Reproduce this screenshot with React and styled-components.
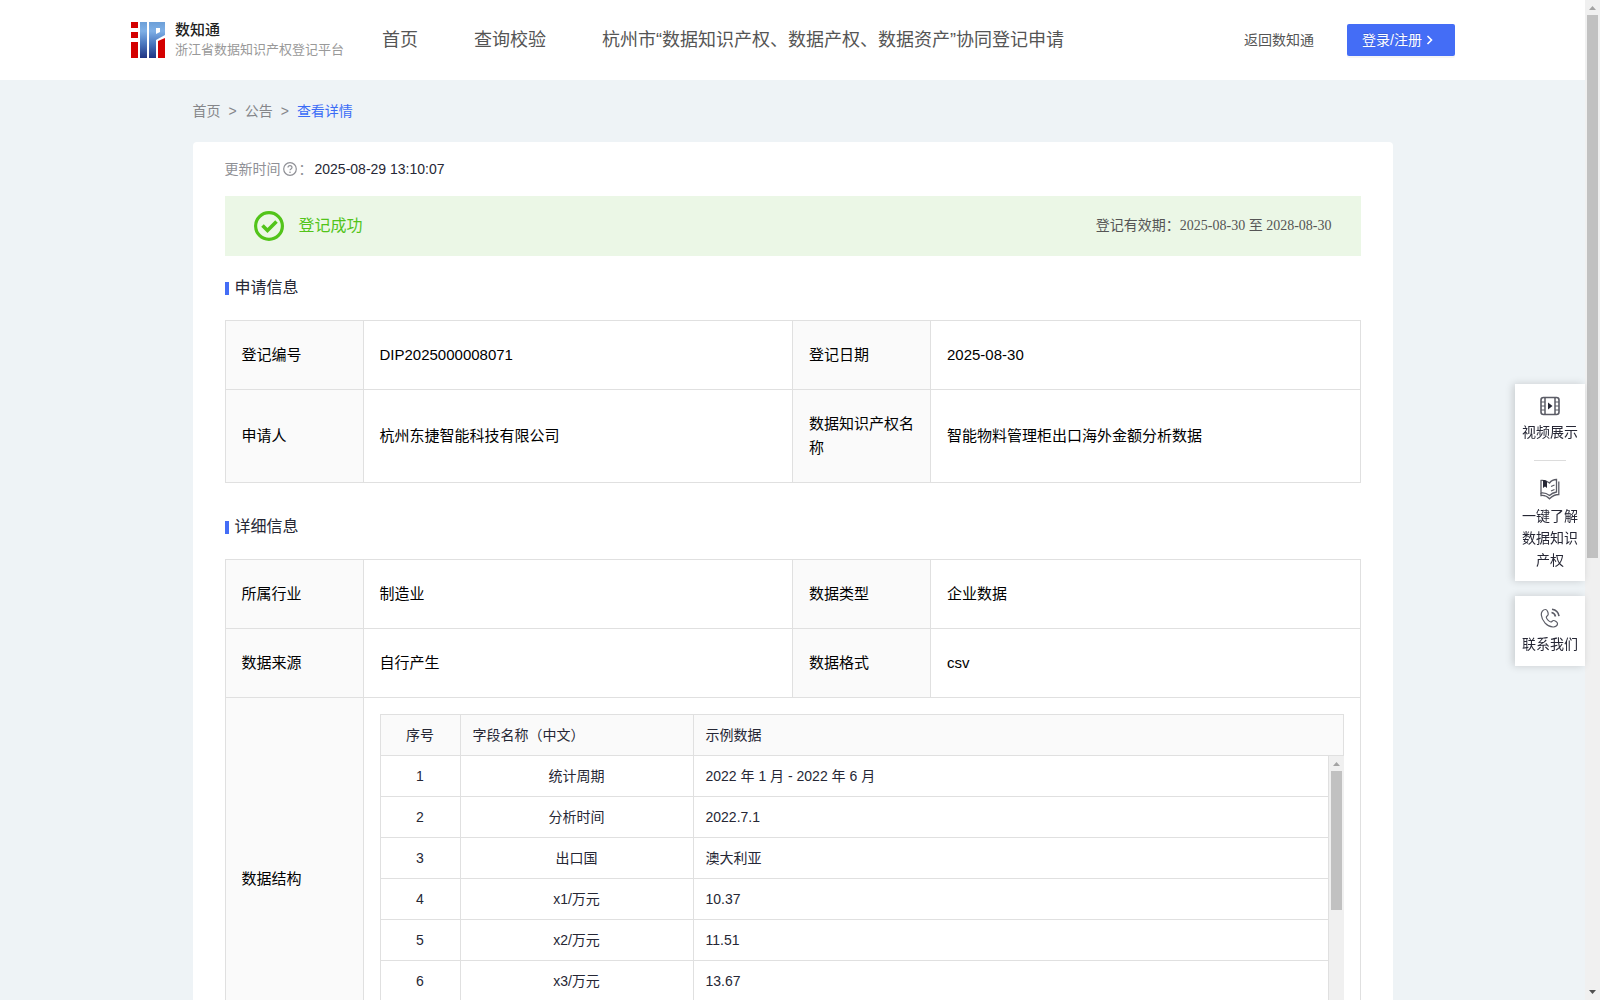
import React from "react";
import styled, { createGlobalStyle } from "styled-components";

const GlobalStyle = createGlobalStyle`
  * {
    box-sizing: border-box;
  }
  body {
    margin: 0;
    font-family: "Liberation Sans", "Noto Sans CJK SC", sans-serif;
    font-size: 14px;
    line-height: 22px;
    color: #262735;
    background: #eef3f6;
  }
  a {
    color: inherit;
    text-decoration: none;
  }
`;

const applyRows = [
  ["登记编号", "DIP2025000008071", "登记日期", "2025-08-30"],
  ["申请人", "杭州东捷智能科技有限公司", "数据知识产权名称", "智能物料管理柜出口海外金额分析数据"],
];

const detailRows = [
  ["所属行业", "制造业", "数据类型", "企业数据"],
  ["数据来源", "自行产生", "数据格式", "csv"],
];

const fields = [
  ["统计周期", "2022 年 1 月 - 2022 年 6 月"],
  ["分析时间", "2022.7.1"],
  ["出口国", "澳大利亚"],
  ["x1/万元", "10.37"],
  ["x2/万元", "11.51"],
  ["x3/万元", "13.67"],
];

const Logo = () => (
  <svg width="34" height="36" viewBox="0 0 34 36" aria-hidden="true">
    <defs>
      <linearGradient id="blue" x1="0" y1="0" x2="0" y2="36" gradientUnits="userSpaceOnUse">
        <stop offset="0" stopColor="#6c9fd8" />
        <stop offset="0.25" stopColor="#7fb0e6" />
        <stop offset="0.6" stopColor="#4a78bf" />
        <stop offset="1" stopColor="#1f3483" />
      </linearGradient>
    </defs>
    <path fill="#d40000" d="M0 0h7v6H0zM0 10h7v6H0zM0 20h7v16H0zM27 19l7-3v20h-7z" />
    <path fill="url(#blue)" fillRule="evenodd" d="M9 0h7v36H9zM18 0h16v13l-9 5v18h-7zM25 6v6l4-2V6z" />
  </svg>
);

const FilmIcon = () => (
  <svg width="20" height="20" viewBox="0 0 20 20" fill="none" stroke="#5b5c66" aria-hidden="true">
    <rect x="1" y="1.5" width="18" height="17" rx="2.5" strokeWidth="1.6" />
    <path d="M5 2v16M15 2v16" stroke="#33343f" strokeWidth="1.2" />
    <path d="M1 6h4M1 10h4M1 14h4M15 6h4M15 10h4M15 14h4" strokeWidth="1.2" />
    <path d="M8 6.5v7l4.5-3.5z" fill="#262735" stroke="none" />
  </svg>
);

const BookIcon = () => (
  <svg width="20" height="22" viewBox="0 0 20 22" fill="none" stroke="#5b5c66" strokeWidth="1.3" aria-hidden="true">
    <path d="M1 2.500c3-.5 6 .5 8.500 2.500C11 3 13.500 1.500 16.500 1.500V14c-3 .5-5 1.500-7 3.500C7 15.500 4 14.500 1 15z" />
    <path d="M18.800 3.500v13c-3.500 0-6.500 1.500-9.300 4.200C7 18 4 17 1 17.500V15" />
    <path d="M3 2v8l2-1.500L7 10V3.500L5 2z" fill="#262735" stroke="none" />
    <path d="M11 8.500l3.500-1.500M11 13l3.500-1.500" />
  </svg>
);

const PhoneIcon = () => (
  <svg width="20" height="20" viewBox="0 0 20 20" fill="none" stroke="#5b5c66" strokeWidth="1.200" aria-hidden="true">
    <path d="M5.500 1.500C3 1.500 1 4 1.300 7c.6 6 5.700 11.500 11.700 12 2.500.2 4.700-1.500 4.500-3.500-.1-1.500-2.500-3-4-3-1.200 0-1.500 1.500-2.600 1.500C9 13.500 6.500 11 6.300 9.300 6.200 8.200 8 8 8.200 6.500 8.400 4.500 7 1.500 5.500 1.500z" />
    <path d="M11.500 4.500c2 .3 3.500 1.800 4 4M12 1.200c3.700.5 6.500 3.300 7 7" strokeWidth="1.600" />
  </svg>
);

const CheckIcon = () => (
  <svg width="30" height="30" viewBox="0 0 30 30" fill="none" stroke="#52c41a" aria-hidden="true">
    <circle cx="15" cy="15" r="13.400" strokeWidth="3.200" />
    <path d="M8.500 14.500l5 5 9-9" strokeWidth="3.600" />
  </svg>
);

const HelpIcon = () => (
  <svg width="14" height="14" viewBox="0 0 14 14" fill="none" stroke="#8f9096" aria-hidden="true">
    <circle cx="7" cy="7" r="6.300" strokeWidth="1.200" />
    <path d="M5 5.600c0-2.600 4-2.600 4 0 0 1.300-2 1.400-2 2.700" strokeWidth="1.200" />
    <circle cx="7" cy="10.200" r="0.800" fill="#8f9096" stroke="none" />
  </svg>
);

const Scrollbar = ({ thumb }) => (
  <Rail aria-hidden="true">
    <Arrow viewBox="0 0 15 15" fill="#a3a3a3">
      <path d="M4 10h7L7.500 6z" />
    </Arrow>
    <Track>
      <Thumb $size={thumb} />
    </Track>
    <Arrow viewBox="0 0 15 15" fill="#505050">
      <path d="M4 5h7l-3.500 4z" />
    </Arrow>
  </Rail>
);

const InfoRows = ({ rows }) =>
  rows.map((row) => (
    <tr key={row[0]}>
      <Label scope="row">{row[0]}</Label>
      <Value>{row[1]}</Value>
      <Label scope="row">{row[2]}</Label>
      <Value>{row[3]}</Value>
    </tr>
  ));

const InfoCols = () => (
  <colgroup>
    <LabelCol />
    <col />
    <LabelCol />
    <col />
  </colgroup>
);

const FieldCols = () => (
  <colgroup>
    <FieldCol $width={80} />
    <FieldCol $width={233} />
    <col />
  </colgroup>
);

const App = () => {
  return (
    <Shell>
      <GlobalStyle />
      <Page>
        <Header>
          <Brand href="#">
            <Logo />
            <span>
              <BrandName>数知通</BrandName>
              <BrandSub>浙江省数据知识产权登记平台</BrandSub>
            </span>
          </Brand>
          <Nav>
            <a href="#home">首页</a>
            <a href="#query">查询校验</a>
            <a href="#apply">杭州市“数据知识产权、数据产权、数据资产”协同登记申请</a>
          </Nav>
          <BackLink href="#back">返回数知通</BackLink>
          <LoginButton type="button">
            登录/注册
            <svg width="8" height="10" viewBox="0 0 8 10" fill="none" stroke="#fff" strokeWidth="1.600">
              <path d="M1.500 1l4 4-4 4" />
            </svg>
          </LoginButton>
        </Header>
        <Content>
          <Crumbs aria-label="breadcrumb">
            <a href="#home">首页</a>
            <span>&gt;</span>
            <a href="#notice">公告</a>
            <span>&gt;</span>
            <Current>查看详情</Current>
          </Crumbs>
          <Card>
            <Updated>
              更新时间
              <HelpIcon />
              ：<time>2025-08-29 13:10:07</time>
            </Updated>
            <Banner>
              <CheckIcon />
              <Status>登记成功</Status>
              <Period>登记有效期：2025-08-30 至 2028-08-30</Period>
            </Banner>
            <Title>申请信息</Title>
            <InfoTable>
              <InfoCols />
              <tbody>
                <InfoRows rows={applyRows} />
              </tbody>
            </InfoTable>
            <Title>详细信息</Title>
            <InfoTable>
              <InfoCols />
              <tbody>
                <InfoRows rows={detailRows} />
                <tr>
                  <Label scope="row">数据结构</Label>
                  <NestedCell colSpan={3}>
                    <FieldTable $head>
                      <FieldCols />
                      <thead>
                        <tr>
                          <FieldHead $center>序号</FieldHead>
                          <FieldHead>字段名称（中文）</FieldHead>
                          <FieldHead>示例数据</FieldHead>
                        </tr>
                      </thead>
                    </FieldTable>
                    <FieldBody>
                      <FieldScroll>
                        <FieldTable>
                          <FieldCols />
                          <tbody>
                            {fields.map(([name, sample], i) => (
                              <tr key={name}>
                                <FieldCell $center>{i + 1}</FieldCell>
                                <FieldCell $center>{name}</FieldCell>
                                <FieldCell>{sample}</FieldCell>
                              </tr>
                            ))}
                          </tbody>
                        </FieldTable>
                      </FieldScroll>
                      <Scrollbar thumb={54} />
                    </FieldBody>
                  </NestedCell>
                </tr>
              </tbody>
            </InfoTable>
          </Card>
        </Content>
      </Page>
      <Scrollbar thumb={56} />
      <Floating>
        <FloatCard>
          <FloatLink href="#video">
            <FilmIcon />
            视频展示
          </FloatLink>
          <Divider />
          <FloatLink href="#guide">
            <BookIcon />
            一键了解数据知识产权
          </FloatLink>
        </FloatCard>
        <FloatCard>
          <FloatLink href="#contact">
            <PhoneIcon />
            联系我们
          </FloatLink>
        </FloatCard>
      </Floating>
    </Shell>
  );
};

const Shell = styled.div`
  display: flex;
  height: 100vh;
  overflow: hidden;
`;

const Page = styled.div`
  flex: 1;
  min-width: 0;
  overflow-y: auto;
  scrollbar-width: none;
`;

const Rail = styled.div`
  flex: none;
  display: flex;
  flex-direction: column;
  width: 15px;
  background: #f0f0f0;
`;

const Arrow = styled.svg`
  flex: none;
  width: 15px;
  height: 15px;
`;

const Track = styled.div`
  flex: 1;
  padding: 0 2px;
`;

const Thumb = styled.div`
  height: ${(props) => props.$size}%;
  background: #c1c1c1;
`;

const Header = styled.header`
  display: flex;
  align-items: center;
  height: 80px;
  padding: 0 130px 0 131px;
  background: #fff;
  white-space: nowrap;
`;

const Brand = styled.a`
  display: flex;
  align-items: center;
  gap: 10px;
  width: 251px;
`;

const BrandName = styled.strong`
  display: block;
  font-size: 15px;
  line-height: 20px;
  font-weight: 500;
  color: #1f1f1f;
`;

const BrandSub = styled.span`
  display: block;
  font-size: 13px;
  line-height: 20px;
  color: #999;
`;

const Nav = styled.nav`
  flex: 1;
  display: flex;
  gap: 56px;
  font-size: 18px;
  color: #555;
`;

const BackLink = styled.a`
  margin-right: 33px;
  color: #555;
`;

const LoginButton = styled.button`
  display: flex;
  align-items: center;
  gap: 4px;
  width: 108px;
  height: 32px;
  padding: 0 15px;
  border: 0;
  border-radius: 2px;
  background: #446df6;
  box-shadow: 0 2px 0 rgba(0, 0, 0, 0.04);
  color: #fff;
  font: inherit;
  text-shadow: 0 -1px 0 rgba(0, 0, 0, 0.12);
  cursor: pointer;
`;

const Content = styled.main`
  max-width: 1200px;
  margin: 0 auto;
`;

const Crumbs = styled.nav`
  display: flex;
  gap: 8px;
  padding: 20px 0;
  color: #85868a;
`;

const Current = styled.span`
  color: #3b6cf6;
`;

const Card = styled.section`
  padding: 16px 32px 32px;
  border-radius: 4px;
  background: #fff;
`;

const Updated = styled.div`
  display: flex;
  align-items: center;
  gap: 2px;
  margin-bottom: 16px;
  color: #8f9096;

  time {
    color: #262735;
  }
`;

const Banner = styled.div`
  display: flex;
  align-items: center;
  height: 60px;
  padding: 0 29px;
  background: #ebf7e6;
`;

const Status = styled.span`
  flex: 1;
  margin-left: 15px;
  font-size: 16px;
  color: #52c41a;
`;

const Period = styled.span`
  font-family: "Liberation Serif", "Noto Sans CJK SC", serif;
  color: #555;
`;

const Title = styled.h2`
  display: flex;
  align-items: center;
  gap: 6px;
  margin: 20px 0;
  font-size: 16px;
  line-height: 24px;
  font-weight: 400;

  &::before {
    content: "";
    width: 4px;
    height: 13px;
    background: #446df6;
  }
`;

const InfoTable = styled.table`
  width: 100%;
  margin-bottom: 32px;
  border-collapse: collapse;
  table-layout: fixed;
  font-size: 15px;
  line-height: 24px;
  color: #000;
`;

const LabelCol = styled.col`
  width: 138px;
`;

const Label = styled.th`
  padding: 22px 16px;
  border: 1px solid #e0e0e0;
  background: #fafafa;
  font-weight: 400;
  text-align: left;
`;

const Value = styled.td`
  padding: 22px 16px;
  border: 1px solid #e0e0e0;
`;

const NestedCell = styled.td`
  padding: 16px;
  border: 1px solid #e0e0e0;
`;

const FieldTable = styled.table`
  width: 100%;
  border-collapse: separate;
  border-spacing: 0;
  border-left: 1px solid #e0e0e0;
  border-top: ${(props) => (props.$head ? "1px solid #e0e0e0" : "0")};
  table-layout: fixed;
  font-size: 14px;
  line-height: 22px;
  color: #262735;
`;

const FieldCol = styled.col`
  width: ${(props) => props.$width}px;
`;

const FieldHead = styled.th`
  padding: 9px 12px;
  border-right: 1px solid #e0e0e0;
  border-bottom: 1px solid #e0e0e0;
  background: #fafafa;
  font-weight: 400;
  text-align: ${(props) => (props.$center ? "center" : "left")};
`;

const FieldCell = styled.td`
  padding: 9px 12px;
  border-right: 1px solid #e0e0e0;
  border-bottom: 1px solid #e0e0e0;
  text-align: ${(props) => (props.$center ? "center" : "left")};
`;

const FieldBody = styled.div`
  display: flex;
  height: 287px;
`;

const FieldScroll = styled.div`
  flex: 1;
  overflow-y: auto;
  scrollbar-width: none;
`;

const Floating = styled.aside`
  position: fixed;
  top: 384px;
  right: 15px;
  display: flex;
  flex-direction: column;
  gap: 15px;
  width: 70px;
`;

const FloatCard = styled.div`
  min-height: 70px;
  padding: 12px 7px 10px;
  background: #fff;
  box-shadow: -2px 0 8px rgba(0, 0, 0, 0.16);
`;

const FloatLink = styled.a`
  display: flex;
  flex-direction: column;
  align-items: center;
  gap: 5px;
  text-align: center;
`;

const Divider = styled.hr`
  width: 32px;
  margin: 17px auto;
  border: 0;
  border-top: 1px solid #dcdcdc;
`;

export default App;
